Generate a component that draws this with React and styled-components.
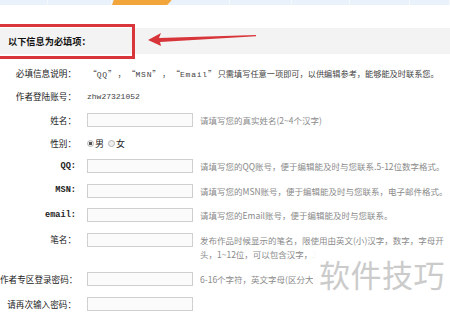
import React from 'react';
import styled, { createGlobalStyle } from 'styled-components';

const Global = createGlobalStyle`
  html, body {
    margin: 0;
    padding: 0;
    background: #fff;
  }
  body {
    font-family: "Noto Sans CJK SC", "Liberation Sans", sans-serif;
    color: #333;
  }
`;

const Page = styled.div`
  position: relative;
  width: 450px;
  height: 312px;
  overflow: hidden;
  background: #fff;
`;

const NavStrip = styled.div`
  display: flex;
  height: 5px;
  background: #e9f2fa;
`;

const NavTab = styled.div`
  width: ${(p) => p.w}px;
  border-right: 1px solid #f6f9fc;
  background: ${(p) => (p.active ? '#f1a53a' : 'transparent')};
  clip-path: ${(p) => (p.active ? 'polygon(3% 0, 100% 0, 92% 100%, 0 100%)' : 'none')};
`;

const HeaderBar = styled.div`
  margin-top: 23px;
  height: 26px;
  display: flex;
  align-items: center;
  padding-left: 8px;
  background: #f3f3f3;
  font-size: 9.2px;
  font-weight: 700;
  color: #111;
`;

const RedBox = styled.div`
  position: absolute;
  left: -4px;
  top: 24px;
  width: 133px;
  height: 29px;
  border: 3px solid #d9363b;
`;

const Arrow = styled.svg`
  position: absolute;
  left: 146px;
  top: 32px;
`;

const Form = styled.div`
  padding-top: 8px;
  display: flex;
  flex-direction: column;
`;

const Row = styled.div`
  display: grid;
  grid-template-columns: 76px 1fr;
  column-gap: 11px;
  align-items: ${(p) => (p.top ? 'start' : 'center')};
  height: ${(p) => p.h || 24}px;
  padding-top: ${(p) => (p.top ? 6 : 0)}px;
  box-sizing: border-box;
`;

const Label = styled.div`
  text-align: right;
  white-space: nowrap;
  font-size: 8.6px;
  color: #222;
  font-family: ${(p) => (p.mono ? '"Liberation Mono", monospace' : 'inherit')};
  font-weight: ${(p) => (p.mono ? 700 : 400)};
  line-height: 13px;
`;

const Value = styled.div`
  display: flex;
  align-items: ${(p) => (p.top ? 'flex-start' : 'center')};
  white-space: nowrap;
  font-size: ${(p) => p.size || 8.5}px;
  color: #444;
  line-height: 13px;
`;

const Mono = styled.span`
  font-family: "Liberation Mono", monospace;
  font-size: 8px;
  letter-spacing: ${(p) => (p.wide ? 0.8 : 0)}px;
`;

const Quoted = styled.span`
  margin: 0 1.5px;
`;

const Input = styled.div`
  flex: none;
  width: 104px;
  height: 12px;
  border: 1px solid #cfcfcf;
  background: #fbfbfb;
`;

const Hint = styled.div`
  margin-left: 7px;
  font-size: 8.5px;
  color: #8a8a8a;
  line-height: 14px;
  white-space: nowrap;
`;

const Radio = styled.span`
  display: inline-block;
  width: 7px;
  height: 7px;
  border-radius: 50%;
  border: 1px solid #b5b5b5;
  box-sizing: border-box;
  background: ${(p) => (p.on ? 'radial-gradient(circle, #555 0 1.6px, #eee 2px)' : '#eee')};
  margin-right: 1px;
`;

const RadioText = styled.span`
  font-size: 9px;
  color: #222;
  margin-right: 4px;
`;

const Watermark = styled.div`
  position: absolute;
  left: 313px;
  top: 247px;
  width: 137px;
  height: 52px;
  background: rgba(255, 255, 255, 0.94);
  display: flex;
  align-items: center;
  justify-content: flex-end;
  padding-right: 5px;
  box-sizing: border-box;
  font-size: 31px;
  letter-spacing: 0.5px;
  color: #cbcbcb;
`;

export default function App() {
  return (
    <Page>
      <Global />
      <NavStrip>
        <NavTab w={48} />
        <NavTab w={64} />
        <NavTab w={60} active />
        <NavTab w={58} />
        <NavTab w={62} />
        <NavTab w={58} />
        <NavTab w={60} />
        <NavTab w={40} />
      </NavStrip>
      <HeaderBar>以下信息为必填项：</HeaderBar>
      <Form>
        <Row h={23}>
          <Label>必填信息说明：</Label>
          <Value size={8.2}>
            <Quoted>“<Mono wide>QQ</Mono>”</Quoted>，<Quoted>“<Mono wide>MSN</Mono>”</Quoted>，
            <Quoted>“<Mono wide>Email</Mono>”</Quoted>只需填写任意一项即可，以供编辑参考，能够能及时联系您。
          </Value>
        </Row>
        <Row h={23}>
          <Label>作者登陆账号：</Label>
          <Value>
            <Mono>zhw27321052</Mono>
          </Value>
        </Row>
        <Row>
          <Label>姓名：</Label>
          <Value>
            <Input />
            <Hint>请填写您的真实姓名(2~4个汉字)</Hint>
          </Value>
        </Row>
        <Row h={22}>
          <Label>性别：</Label>
          <Value>
            <Radio on />
            <RadioText>男</RadioText>
            <Radio />
            <RadioText>女</RadioText>
          </Value>
        </Row>
        <Row h={24}>
          <Label mono>QQ:</Label>
          <Value>
            <Input />
            <Hint>请填写您的QQ账号，便于编辑能及时与您联系.5-12位数字格式。</Hint>
          </Value>
        </Row>
        <Row h={25}>
          <Label mono>MSN:</Label>
          <Value>
            <Input />
            <Hint>请填写您的MSN账号，便于编辑能及时与您联系，电子邮件格式。</Hint>
          </Value>
        </Row>
        <Row h={24}>
          <Label mono>email:</Label>
          <Value>
            <Input />
            <Hint>请填写您的Email账号，便于编辑能及时与您联系。</Hint>
          </Value>
        </Row>
        <Row h={39} top>
          <Label>笔名：</Label>
          <Value top>
            <Input />
            <Hint>
              发布作品时候显示的笔名，限使用由英文(小)汉字，数字，字母开
              <br />
              头，1~12位，可以包含汉字，1
            </Hint>
          </Value>
        </Row>
        <Row h={26}>
          <Label>作者专区登录密码：</Label>
          <Value>
            <Input />
            <Hint>6-16个字符，英文字母(区分大小写)</Hint>
          </Value>
        </Row>
        <Row h={24}>
          <Label>请再次输入密码：</Label>
          <Value>
            <Input />
          </Value>
        </Row>
      </Form>
      <RedBox />
      <Arrow width="112" height="14" viewBox="0 0 112 14">
        <polygon points="2,8 15,1 13,6 110,3 110,4.2 14,10 15,14" fill="#d8353a" />
      </Arrow>
      <Watermark>软件技巧</Watermark>
    </Page>
  );
}
